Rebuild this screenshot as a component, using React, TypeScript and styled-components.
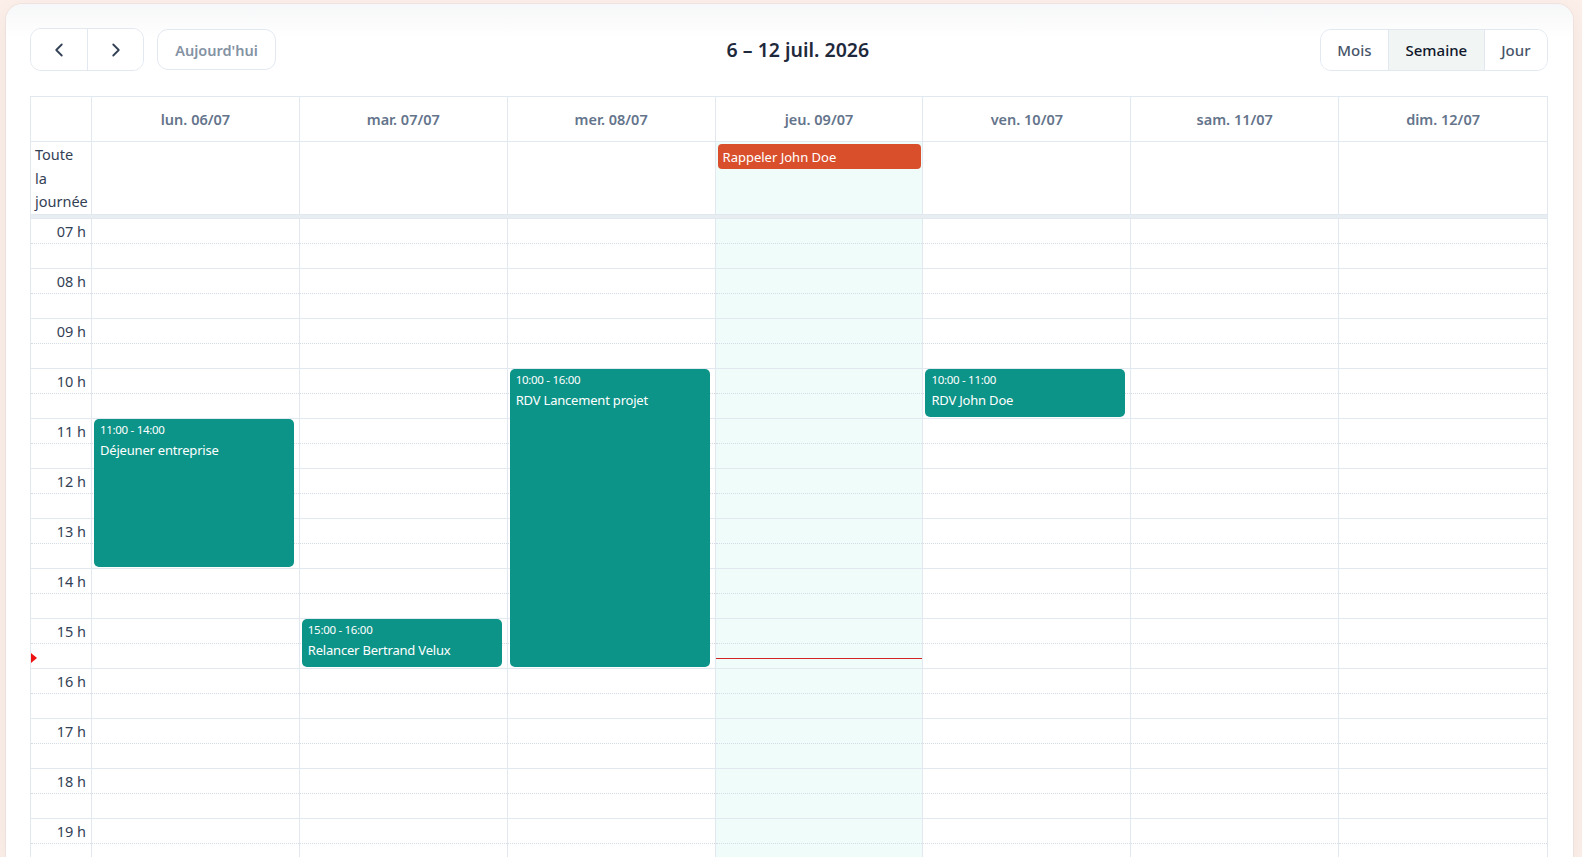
import React from 'react';
import styled, { createGlobalStyle } from 'styled-components';
import { ChevronLeft, ChevronRight } from 'lucide-react';

const GlobalStyle = createGlobalStyle`
  html, body {
    margin: 0;
    padding: 0;
    height: 100%;
    overflow: hidden;
    background: #fcefe9;
    font-family: "Noto Sans", "Open Sans", Arial, sans-serif;
    color: #1e293b;
  }
  * { box-sizing: border-box; }
`;

const SLOT = 25;
const START_HOUR = 7;
const END_HOUR = 20;

const days = [
  { label: 'lun. 06/07' },
  { label: 'mar. 07/07' },
  { label: 'mer. 08/07' },
  { label: 'jeu. 09/07', today: true },
  { label: 'ven. 10/07' },
  { label: 'sam. 11/07' },
  { label: 'dim. 12/07' },
];

const events = [
  { day: 0, start: 11, end: 14, time: '11:00 - 14:00', title: 'Déjeuner entreprise' },
  { day: 1, start: 15, end: 16, time: '15:00 - 16:00', title: 'Relancer Bertrand Velux' },
  { day: 2, start: 10, end: 16, time: '10:00 - 16:00', title: 'RDV Lancement projet' },
  { day: 4, start: 10, end: 11, time: '10:00 - 11:00', title: 'RDV John Doe' },
];

// current time marker (15:48)
const NOW = 15.8;

const hours: number[] = [];
for (let h = START_HOUR; h < END_HOUR; h++) hours.push(h);

const App = () => {
  return (
    <Page>
      <GlobalStyle />
      <Card>
        <Toolbar>
          <ToolbarChunk>
            <ButtonGroup>
              <NavButton aria-label="Précédent">
                <ChevronLeft size={22} strokeWidth={2} />
              </NavButton>
              <NavButton aria-label="Suivant">
                <ChevronRight size={22} strokeWidth={2} />
              </NavButton>
            </ButtonGroup>
            <TodayButton disabled>Aujourd'hui</TodayButton>
          </ToolbarChunk>

          <Title>6 – 12 juil. 2026</Title>

          <ToolbarChunk>
            <ButtonGroup>
              <ViewButton>Mois</ViewButton>
              <ViewButton $active>Semaine</ViewButton>
              <ViewButton>Jour</ViewButton>
            </ButtonGroup>
          </ToolbarChunk>
        </Toolbar>

        <Calendar>
          <HeaderRow>
            <AxisCell />
            {days.map((d) => (
              <HeaderCell key={d.label}>{d.label}</HeaderCell>
            ))}
          </HeaderRow>

          <AllDayRow>
            <AllDayLabel>Toute la journée</AllDayLabel>
            {days.map((d, i) => (
              <AllDayCell key={d.label} $today={d.today}>
                {i === 3 && <AllDayEvent>Rappeler John Doe</AllDayEvent>}
              </AllDayCell>
            ))}
          </AllDayRow>

          <Divider />

          <Body>
            <AxisColumn>
              {hours.map((h) => (
                <React.Fragment key={h}>
                  <Slot>
                    <HourLabel>{String(h).padStart(2, '0')} h</HourLabel>
                  </Slot>
                  <Slot $half />
                </React.Fragment>
              ))}
              <NowArrow style={{ top: (NOW - START_HOUR) * SLOT * 2 - 5 }} />
            </AxisColumn>

            {days.map((d, i) => (
              <DayColumn key={d.label} $today={d.today}>
                {hours.map((h) => (
                  <React.Fragment key={h}>
                    <Slot />
                    <Slot $half />
                  </React.Fragment>
                ))}
                {events
                  .filter((e) => e.day === i)
                  .map((e) => (
                    <Event
                      key={e.title}
                      style={{
                        top: (e.start - START_HOUR) * SLOT * 2 + 1,
                        height: (e.end - e.start) * SLOT * 2 - 2,
                      }}
                    >
                      <EventTime>{e.time}</EventTime>
                      <EventTitle>{e.title}</EventTitle>
                    </Event>
                  ))}
                {d.today && (
                  <NowLine style={{ top: (NOW - START_HOUR) * SLOT * 2 }} />
                )}
              </DayColumn>
            ))}
          </Body>
        </Calendar>
      </Card>
    </Page>
  );
};

export default App;

const Page = styled.div`
  height: 100vh;
  padding: 4px 9px 0 6px;
`;

const Card = styled.div`
  height: 100%;
  background: linear-gradient(#f6f7f8 0, #ffffff 34px);
  border-radius: 16px 16px 0 0;
  box-shadow: 0 0 0 1px rgba(15, 23, 42, 0.04), 0 6px 24px rgba(15, 23, 42, 0.05);
  padding: 24px 25px 0 24px;
  overflow: hidden;
`;

const Toolbar = styled.div`
  display: flex;
  align-items: center;
  justify-content: space-between;
  height: 43px;
  margin-bottom: 25px;
`;

const ToolbarChunk = styled.div`
  display: flex;
  align-items: center;
  gap: 13px;
`;

const Title = styled.h2`
  margin: 0;
  font-size: 19.5px;
  font-weight: 600;
  color: #1e293b;
`;

const ButtonGroup = styled.div`
  display: flex;
  border: 1px solid #e2e8f0;
  border-radius: 11px;
  overflow: hidden;
  background: #fff;
`;

const NavButton = styled.button`
  width: 56px;
  height: 41px;
  display: flex;
  align-items: center;
  justify-content: center;
  border: none;
  background: #fff;
  color: #334155;
  cursor: pointer;
  padding: 0;

  & + & {
    border-left: 1px solid #e2e8f0;
  }
`;

const TodayButton = styled.button`
  height: 41px;
  width: 119px;
  border: 1px solid #e2e8f0;
  border-radius: 11px;
  background: #fff;
  color: #8492a3;
  font-family: inherit;
  font-size: 14.5px;
  font-weight: 600;
  padding: 0;
`;

const ViewButton = styled.button<{ $active?: boolean }>`
  height: 40px;
  padding: 0 16.5px;
  border: none;
  background: ${(p) => (p.$active ? '#f1f5f4' : '#fff')};
  color: ${(p) => (p.$active ? '#0f172a' : '#475569')};
  font-family: inherit;
  font-size: 15px;
  font-weight: 500;
  cursor: pointer;

  & + & {
    border-left: 1px solid #e2e8f0;
  }
`;

const Calendar = styled.div`
  border: 1px solid #e2e8f0;
  border-bottom: none;
`;

const gridColumns = `
  display: grid;
  grid-template-columns: 61px repeat(7, 1fr);
`;

const HeaderRow = styled.div`
  ${gridColumns}
  height: 45px;
  border-bottom: 1px solid #e2e8f0;
`;

const AxisCell = styled.div`
  border-right: 1px solid #e2e8f0;
`;

const HeaderCell = styled.div`
  display: flex;
  align-items: center;
  justify-content: center;
  font-size: 14.5px;
  font-weight: 600;
  color: #64748b;
  border-right: 1px solid #e2e8f0;

  &:last-child {
    border-right: none;
  }
`;

const AllDayRow = styled.div`
  ${gridColumns}
  height: 72px;
`;

const AllDayLabel = styled.div`
  padding: 1px 8px 0 4px;
  font-size: 14.5px;
  line-height: 23.7px;
  color: #334155;
  border-right: 1px solid #e2e8f0;
`;

const AllDayCell = styled.div<{ $today?: boolean }>`
  background: ${(p) => (p.$today ? '#effcf9' : 'transparent')};
  border-right: 1px solid #e2e8f0;
  padding: 2px 1px 0 2px;

  &:last-child {
    border-right: none;
  }
`;

const AllDayEvent = styled.div`
  height: 25px;
  background: #d94f2c;
  border-radius: 4px;
  color: #fff;
  font-size: 13px;
  line-height: 26px;
  padding: 0 5px;
  white-space: nowrap;
  overflow: hidden;
`;

const Divider = styled.div`
  height: 4px;
  background: #e8edf2;
  border-top: 1px solid #e2e8f0;
`;

const Body = styled.div`
  ${gridColumns}
`;

const AxisColumn = styled.div`
  position: relative;
  border-right: 1px solid #e2e8f0;
`;

const DayColumn = styled.div<{ $today?: boolean }>`
  position: relative;
  background: ${(p) => (p.$today ? '#effcf9' : 'transparent')};
  border-right: 1px solid #e2e8f0;

  &:last-child {
    border-right: none;
  }
`;

const Slot = styled.div<{ $half?: boolean }>`
  height: ${SLOT}px;
  border-top: 1px ${(p) => (p.$half ? 'dotted #d4dbe4' : 'solid #e2e8f0')};
`;

const HourLabel = styled.div`
  text-align: right;
  padding: 2px 5px 0 0;
  font-size: 14.5px;
  line-height: 20px;
  color: #334155;
`;

const Event = styled.div`
  position: absolute;
  left: 2px;
  right: 5px;
  background: #0d9488;
  border-radius: 5px;
  color: #fff;
  padding: 3px 6px;
  overflow: hidden;
  z-index: 2;
`;

const EventTime = styled.div`
  font-size: 11.5px;
  line-height: 16px;
  letter-spacing: -0.3px;
`;

const EventTitle = styled.div`
  margin-top: 4px;
  font-size: 13px;
  line-height: 17px;
  letter-spacing: -0.2px;
`;

const NowLine = styled.div`
  position: absolute;
  left: 0;
  right: 0;
  height: 1px;
  background: #d32424;
  z-index: 3;
`;

const NowArrow = styled.div`
  position: absolute;
  left: 0;
  width: 0;
  height: 0;
  border-top: 5px solid transparent;
  border-bottom: 5px solid transparent;
  border-left: 6px solid #ee1111;
  z-index: 3;
`;
